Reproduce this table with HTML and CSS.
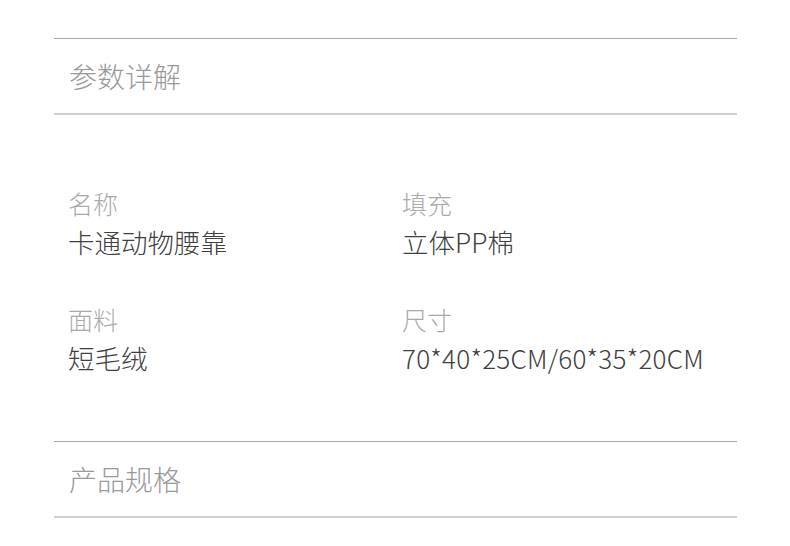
FILE: index.html
```html
<!DOCTYPE html>
<html lang="zh-CN">
<head>
<meta charset="utf-8">
<link rel="stylesheet" href="styles.css">
</head>
<body>
<div class="page">
  <div class="section-head"><span class="title">参数详解</span></div>
  <div class="params">
    <div class="item">
      <div class="label">名称</div>
      <div class="value">卡通动物腰靠</div>
    </div>
    <div class="item">
      <div class="label">填充</div>
      <div class="value">立体PP棉</div>
    </div>
    <div class="item">
      <div class="label">面料</div>
      <div class="value">短毛绒</div>
    </div>
    <div class="item">
      <div class="label">尺寸</div>
      <div class="value size">70*40*25CM/60*35*20CM</div>
    </div>
  </div>
  <div class="section-head"><span class="title">产品规格</span></div>
</div>
</body>
</html>
```

FILE: styles.css
```css
html, body {
  margin: 0;
  padding: 0;
  background: #ffffff;
}
body {
  font-family: "Noto Sans CJK SC", "Noto Sans", sans-serif;
  font-weight: 300;
}
.page {
  width: 683px;
  margin-left: 54px;
  padding-top: 38px;
}
.section-head {
  border-top: 1px solid #aaaaaa;
  border-bottom: 2px solid #d0d0d0;
  display: flex;
  align-items: center;
  padding-left: 15px;
  box-sizing: border-box;
  height: 77px;
}
.title {
  font-size: 28px;
  color: #9a9a9a;
  line-height: 1;
}
.params {
  display: grid;
  grid-template-columns: 334px 1fr;
  row-gap: 51px;
  padding: 75px 0 70px 14px;
}
.item {
  display: flex;
  flex-direction: column;
  gap: 13px;
}
.label {
  font-size: 25px;
  line-height: 26px;
  color: #aaaaaa;
}
.value {
  font-size: 26.5px;
  line-height: 26px;
  color: #404040;
}
.size {
  font-size: 26px;
  letter-spacing: 0.25px;
}
```
